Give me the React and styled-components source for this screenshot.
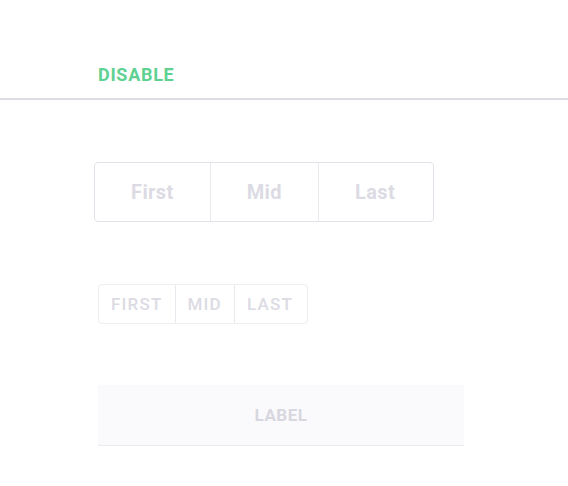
import React from 'react';
import styled, { createGlobalStyle } from 'styled-components';

const GlobalStyle = createGlobalStyle`
  body {
    margin: 0;
    background: #ffffff;
    font-family: Roboto, "Liberation Sans", sans-serif;
  }
`;

const Page = styled.div`
  width: 568px;
  min-height: 486px;
  background: #ffffff;
`;

const Header = styled.div`
  height: 100px;
  padding-left: 98px;
  display: flex;
  align-items: flex-end;
  box-sizing: border-box;
  padding-bottom: 13px;
  border-bottom: 2px solid #dcdce3;
`;

const HeaderTitle = styled.div`
  color: #5fd192;
  font-size: 18px;
  font-weight: 700;
  letter-spacing: 0.7px;
`;

const Content = styled.div`
  padding: 62px 0 0 94px;
  display: flex;
  flex-direction: column;
  align-items: flex-start;
`;

const Group = styled.div`
  display: flex;
  border: 1px solid ${({ $small }) => ($small ? '#ededf2' : '#e3e2eb')};
  border-radius: 4px;
  margin-left: ${({ $small }) => ($small ? '4px' : '0')};
  margin-bottom: ${({ $small }) => ($small ? '61px' : '62px')};
`;

const Segment = styled.button`
  all: unset;
  box-sizing: border-box;
  display: flex;
  align-items: center;
  justify-content: center;
  height: ${({ $small }) => ($small ? '38px' : '58px')};
  padding: ${({ $small }) => ($small ? '0 12px' : '0 36px')};
  font-family: Roboto, "Liberation Sans", sans-serif;
  font-size: ${({ $small }) => ($small ? '17px' : '20px')};
  font-weight: ${({ $small }) => ($small ? 500 : 700)};
  text-transform: ${({ $small }) => ($small ? 'uppercase' : 'none')};
  color: #dcdbe4;
  letter-spacing: ${({ $small }) => ($small ? '1.2px' : '0.4px')};
  & + & {
    border-left: ${({ $small }) => ($small ? '1px solid #e8e8ee' : '2px solid #e3e2eb')};
  }
  &:last-child {
    padding-right: ${({ $small }) => ($small ? '14px' : '38px')};
  }
`;

const LabelButton = styled.div`
  margin-left: 4px;
  width: 366px;
  height: 61px;
  box-sizing: border-box;
  background: #fafafc;
  border-bottom: 1px solid #ececf0;
  display: flex;
  align-items: center;
  justify-content: center;
  color: #d8d7e0;
  font-size: 17px;
  font-weight: 700;
  letter-spacing: 0.5px;
`;

const labels = ['First', 'Mid', 'Last'];

export default function App() {
  return (
    <Page>
      <GlobalStyle />
      <Header>
        <HeaderTitle>DISABLE</HeaderTitle>
      </Header>
      <Content>
        <Group>
          {labels.map((t) => (
            <Segment key={t} disabled>{t}</Segment>
          ))}
        </Group>
        <Group $small>
          {labels.map((t) => (
            <Segment key={t} $small disabled>{t}</Segment>
          ))}
        </Group>
        <LabelButton>LABEL</LabelButton>
      </Content>
    </Page>
  );
}
